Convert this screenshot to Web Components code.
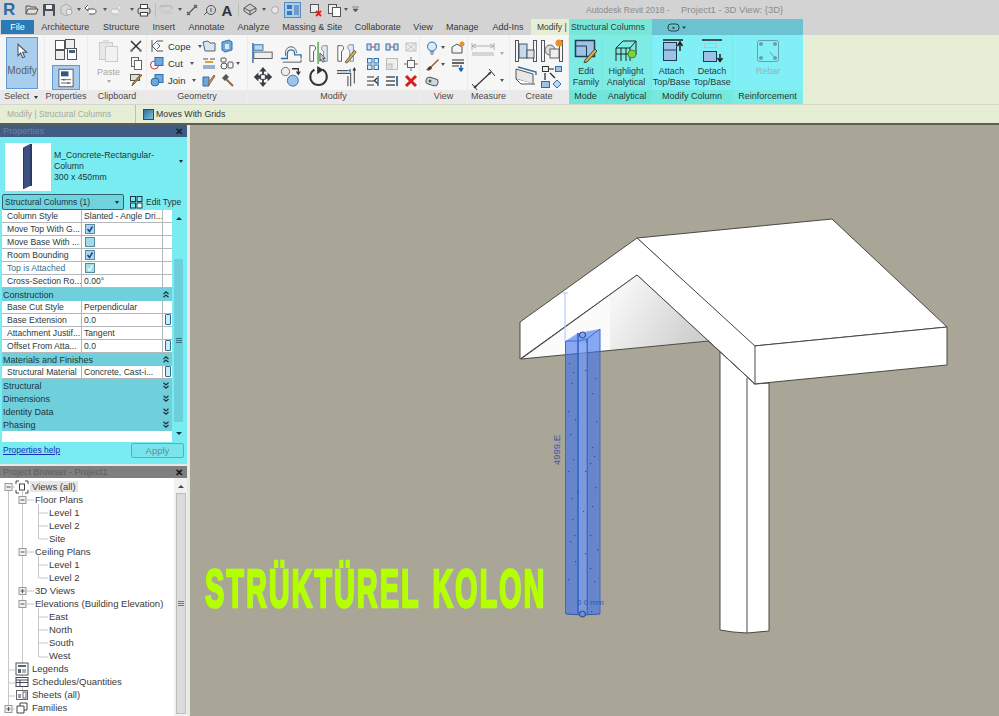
<!DOCTYPE html>
<html>
<head>
<meta charset="utf-8">
<title>Revit</title>
<style>
html, body { margin: 0; padding: 0; background: #a9a597; }
body { font-family: "Liberation Sans", Arial, sans-serif; font-size: 9px; color: #3a3a3a; overflow: hidden; }
</style>
</head>
<body>
<rv-app></rv-app>
<script>
const S = 'fill="none" stroke="#555" stroke-width="1"';
const B = 'fill="#6fa8dc" stroke="#2f6fa8" stroke-width="1"';
const ICONS = {
  open: [14, `<path d="M1 11V3h4l1 1h5v2" ${S}/><path d="M1 11l2-5h10l-2 5z" fill="#e4e0d0" stroke="#555"/>`],
  save: [14, `<rect x="1" y="1" width="12" height="12" rx="1" fill="#4a4f55"/><rect x="4" y="2" width="6" height="4" fill="#eee"/><rect x="3" y="8" width="8" height="5" fill="#cfd4d8"/>`],
  sync: [14, `<path d="M2 4l5-3 5 3v6l-5 3-5-3z" fill="#d8d8d8" stroke="#aaa"/><circle cx="10" cy="9" r="3" fill="#e8e8e8" stroke="#aaa"/>`],
  undo: [14, `<path d="M4 2L1 5l3 3V6h5c2 0 3 1 3 2.500S11 11 9 11H5" fill="#fff" stroke="#555"/>`],
  redo: [14, `<path d="M10 2l3 3-3 3V6H5C3 6 2 7 2 8.500S3 11 5 11h4" fill="#eee" stroke="#bbb"/>`],
  print: [14, `<rect x="1" y="5" width="12" height="6" rx="2" fill="#ddd" stroke="#444"/><rect x="3.500" y="1.500" width="7" height="4" fill="#fff" stroke="#444"/><rect x="3.500" y="9.500" width="7" height="3.500" fill="#fff" stroke="#444"/>`],
  measure: [14, `<path d="M1 3h12M1 4v2M13 4v2" stroke="#aaa" fill="none"/><rect x="1" y="7" width="12" height="4" fill="#ccc"/>`],
  aligned: [14, `<path d="M2 12L12 2M2 9l3 3M9 2l3 3" stroke="#555" fill="none" stroke-width="1.200"/>`],
  tag: [14, `<circle cx="8" cy="7" r="4.500" ${S}/><path d="M1 12l3-3" stroke="#555"/><path d="M8 5v4" stroke="#555"/>`],
  letter: [14, `<text x="7" y="12.500" text-anchor="middle" font-family="Liberation Sans, sans-serif" font-size="15" font-weight="700" fill="#333">A</text>`],
  house: [14, `<path d="M7 1l6 4v3l-6 4-6-4V5z" fill="#c9ccd0" stroke="#555"/><path d="M1 5l6 3 6-3M7 8v4" ${S}/>`],
  sun: [14, `<circle cx="7" cy="7" r="3.500" fill="#e8e8e8" stroke="#aaa"/>`],
  thin: [14, `<rect x="1" y="2" width="5" height="4" fill="#3a7ab8"/><rect x="1" y="8" width="5" height="4" fill="#3a7ab8"/><path d="M8 3h5M8 5h5M8 7h5M8 9h5M8 11h5" stroke="#3a6b98"/>`],
  closehid: [14, `<rect x="1.500" y="1.500" width="8" height="8" fill="#eee" stroke="#555"/><path d="M7 8l5 5M12 8l-5 5" stroke="#d22" stroke-width="1.800"/>`],
  sw: [14, `<rect x="1.500" y="1.500" width="8" height="9" fill="#eee" stroke="#555"/><rect x="5.500" y="4.500" width="8" height="9" fill="#fff" stroke="#555"/>`],
  scissors: [14, `<path d="M2 2l10 10M12 2L2 12" stroke="#333" stroke-width="1.500"/><circle cx="2.500" cy="11.500" r="1.500" fill="#888"/><circle cx="11.500" cy="11.500" r="1.500" fill="#888"/>`],
  copy: [14, `<rect x="2.500" y="1.500" width="7" height="9" fill="#f4f4f4" stroke="#666"/><rect x="5.500" y="4.500" width="7" height="9" fill="#fff" stroke="#666"/>`],
  brush: [14, `<rect x="1.500" y="1.500" width="9" height="6" fill="#ddd" stroke="#555"/><path d="M13 2L5 11l-2 2 1-3 7-8z" fill="#d9a441" stroke="#7a5a20"/>`],
  cope: [14, `<path d="M2 1v12M2 7l5-5h6M2 7l5 5h6" ${S}/><path d="M7 4l3 3-3 3" fill="none" stroke="#2f6fa8"/>`],
  cut: [14, `<circle cx="4.500" cy="9" r="4" fill="#fff" stroke="#b33"/><rect x="5" y="1.500" width="8" height="8" ${B}/>`],
  join: [14, `<rect x="5" y="1.500" width="8" height="8" ${B}/><circle cx="5" cy="9" r="4" ${B}/>`],
  wallfold: [14, `<path d="M1 3l5-1 2 2h5v8H3z" fill="#d8e4f0" stroke="#567"/>`],
  cube: [14, `<path d="M2 3l7-2 3 2v8l-7 2-3-2z" ${B}/><path d="M5 5h4v5H5z" fill="#dfe9f2"/>`],
  beam: [14, `<path d="M1 3h5M8 3h5" stroke="#555"/><rect x="3" y="5" width="8" height="2" fill="#e0a030"/><path d="M1 10h12M1 12h12" stroke="#2f6fa8"/>`],
  cutvoid: [14, `<rect x="1" y="2" width="5" height="4" rx="1" ${S}/><circle cx="4" cy="10" r="3" ${S}/><rect x="8" y="6" width="5" height="6" rx="1" ${S}/>`],
  paint: [14, `<path d="M1 4h6v9H1z" ${B}/><path d="M6 10l6-8 1 1-6 9z" fill="#e09a2a" stroke="#865"/>`],
  hammer: [14, `<path d="M2 5l4-4 3 3-4 4z" fill="#556"/><path d="M6 6l7 7" stroke="#8a6a40" stroke-width="2"/>`],
  alignblue: [14, `<rect x="1" y="4" width="4" height="6" fill="#cfe0f0" stroke="#2f6fa8"/><rect x="9" y="4" width="4" height="6" fill="#cfe0f0" stroke="#2f6fa8"/><path d="M5 7h4" stroke="#c33"/>`],
  pin: [14, `<rect x="2" y="3" width="10" height="8" fill="#ededed" stroke="#c0c0c0"/><path d="M2 3l10 8M12 3L2 11" stroke="#c8c8c8"/>`],
  grid: [14, `<rect x="1.500" y="1.500" width="4.500" height="4.500" fill="#dbe7f2" stroke="#2f6fa8"/><rect x="8" y="1.500" width="4.500" height="4.500" fill="#dbe7f2" stroke="#2f6fa8"/><rect x="1.500" y="8" width="4.500" height="4.500" fill="#dbe7f2" stroke="#2f6fa8"/><rect x="8" y="8" width="4.500" height="4.500" fill="#dbe7f2" stroke="#2f6fa8"/>`],
  scale: [14, `<rect x="1.500" y="1.500" width="11" height="11" fill="#eee" stroke="#bbb"/><rect x="1.500" y="7" width="5.500" height="5.500" fill="#ddd" stroke="#bbb"/>`],
  unpin: [14, `<rect x="3.500" y="3.500" width="7" height="7" fill="none" stroke="#666"/><path d="M7 0v3M7 11v3M0 7h3M11 7h3" stroke="#666"/>`],
  arrowr: [14, `<path d="M1 3h7M1 7h8M1 11h7M8 7l3-3M9 7l3 3" stroke="#333" stroke-width="1.200" fill="none"/><path d="M12 2v10" stroke="#2f6fa8" stroke-width="1.500"/>`],
  arrowr2: [14, `<path d="M1 3h9M1 7h9M1 11h9" stroke="#555" stroke-width="1.500" fill="none"/><path d="M12 2v10" stroke="#2f6fa8" stroke-width="1.800"/>`],
  del: [14, `<path d="M2 2l10 10M12 2L2 12" stroke="#d61f1f" stroke-width="3"/>`],
  bulb: [14, `<circle cx="7" cy="5.500" r="4.500" fill="#d8ecfa" stroke="#2f6fa8"/><path d="M5 11h4M5.500 13h3" stroke="#555"/>`],
  viewbox: [14, `<path d="M1 6l5-3 5 3v6H1z" fill="#f4f4f4" stroke="#555"/><circle cx="11" cy="3" r="2.500" fill="#e8912c"/>`],
  viewbrush: [14, `<path d="M13 1L6 8l1 1 7-7z" fill="#9a5b2b"/><path d="M6 8c-3 0-3 3-5 4 3 1 6 0 6-3z" fill="#5a3c22"/>`],
  lines: [14, `<path d="M1 2h12" stroke="#333"/><path d="M1 5h12" stroke="#333" stroke-width="1.500"/><path d="M1 8h7" stroke="#333"/><path d="M10 7v5M8 10l2 3 2-3" fill="none" stroke="#1c5fb0" stroke-width="1.400"/>`],
  viewsec: [14, `<rect x="1" y="3" width="12" height="7" rx="3" transform="rotate(15 7 6.500)" fill="#cfd8e0" stroke="#555"/><circle cx="5" cy="6" r="1.500" fill="#555"/>`],
  dimen: [24, `<path d="M1 2v7M23 2v7M1 5h22" stroke="#b0b0b0" fill="none"/><path d="M1 5l4-2M1 5l4 2M23 5l-4-2M23 5l-4 2" stroke="#b0b0b0"/><rect x="1" y="11" width="22" height="4" fill="#d6d6d6"/>`],
  ruler: [24, `<path d="M3 20L20 4" stroke="#333" stroke-width="1.200"/><path d="M1 16l6 7M18 1l6 7" stroke="#333"/><path d="M3 20l3-1-2-2zM20 4l-3 1 2 2z" fill="#333"/>`],
  tiles: [24, `<rect x="1.500" y="2.500" width="9" height="9" fill="#fff" stroke="#555"/><rect x="11.500" y="1.500" width="9" height="9" fill="#eee" stroke="#555"/><rect x="1.500" y="12.500" width="9" height="9" fill="#eee" stroke="#555"/><rect x="13.500" y="10.500" width="9" height="11" fill="#fff" stroke="#555"/><rect x="15" y="12" width="6" height="3" fill="#3e5f88"/>`],
  panel: [24, `<rect x="3.500" y="1.500" width="17" height="21" fill="#fff" stroke="#445"/><rect x="6" y="4" width="9" height="6" fill="#2f5684"/><path d="M6 14h12M6 18h12" stroke="#445"/><path d="M8 14l2-1.500v3zM16 18l-2-1.500v3z" fill="#445"/>`],
  paste: [24, `<rect x="2.500" y="3.500" width="13" height="17" fill="#e8e8e8" stroke="#ccc"/><rect x="8.500" y="7.500" width="12" height="15" fill="#f2f2f2" stroke="#ccc"/><rect x="6" y="1" width="6" height="4" fill="#ddd"/>`],
  align: [24, `<path d="M1 1v22" stroke="#2f6fa8" stroke-width="1.500"/><rect x="2" y="3" width="10" height="6" fill="#bcd8f0" stroke="#2f6fa8"/><rect x="2" y="11" width="20" height="7" fill="#eee" stroke="#555"/>`],
  offset: [24, `<path d="M1 18h7v-5c0-6 8-6 8 0v1h7v4" fill="none" stroke="#2f6fa8" stroke-width="1.400"/><path d="M3 22h20v-3" fill="none" stroke="#555"/><path d="M6 15V12c0-9 12-9 12 0" fill="none" stroke="#555"/>`],
  mirror: [24, `<path d="M2 4h4c3 0 3 5 0 6v11H2z" fill="#fff" stroke="#555"/><path d="M11 0v24" stroke="#4aa24a" stroke-width="1.500"/><path d="M21 4h-4c-3 0-3 5 0 6v11h4z" fill="#dfe9f2" stroke="#7a8a9a"/><path d="M13 12l6 6-3 0 2 3-2 1-2-3-1 2z" fill="#ccc" stroke="#555"/>`],
  mirror2: [24, `<path d="M2 4h4c3 0 3 5 0 6v11H2z" fill="#fff" stroke="#555"/><path d="M19 3h-4c-3 0-3 5 0 6v12h4z" fill="#dfe9f2" stroke="#7a8a9a"/><path d="M10 22l10-13 2 2-10 12z" fill="#e2b23c" stroke="#555"/>`],
  move: [24, `<path d="M12 1l4 5h-3v4h4V7l5 5-5 5v-3h-4v4h3l-4 5-4-5h3v-4H7v3l-5-5 5-5v3h4V6H8z" fill="#3a3f46"/><rect x="9.500" y="9.500" width="5" height="5" fill="#fff" stroke="#333"/>`],
  copy2: [24, `<circle cx="6" cy="6" r="4.500" fill="#eee" stroke="#666"/><path d="M13 3h7v5M18 6l2 3 2-3" fill="none" stroke="#333" stroke-width="1.400"/><circle cx="14" cy="16" r="6" fill="#9cc3e6" stroke="#2f6fa8"/>`],
  rotate: [24, `<path d="M16 4A9 9 0 1 1 7 4" fill="none" stroke="#333" stroke-width="2.200"/><path d="M10 0l7 4-7 5z" fill="#333"/>`],
  trim: [24, `<path d="M1 5h12M1 8h15v14" fill="none" stroke="#555" stroke-width="1.200"/><path d="M13 11v11M20 4v15" stroke="#555" stroke-width="1.200"/><path d="M20 1l-2 4h4z" fill="#333"/><path d="M16 3l-3 2 3 2z" fill="#2f6fa8"/>`],
  comp: [24, `<rect x="1.500" y="1.500" width="3" height="21" fill="none" stroke="#555"/><rect x="19.500" y="1.500" width="3" height="21" fill="none" stroke="#555"/><rect x="5" y="5" width="8" height="14" fill="#c5daec" stroke="#456"/><rect x="13" y="11" width="7" height="8" fill="#e4e4e4" stroke="#456"/>`],
  ingroup: [24, `<rect x="1.500" y="1.500" width="3" height="21" fill="none" stroke="#555"/><rect x="19.500" y="1.500" width="3" height="21" fill="none" stroke="#555"/><circle cx="10" cy="11" r="5" fill="#ddd" stroke="#666"/><rect x="10" y="10" width="9" height="9" fill="#eee" stroke="#666"/><circle cx="19" cy="4" r="3.500" fill="#f0901c"/>`],
  model: [24, `<path d="M2 4l17 5v10L2 14z" fill="#e8e8e8" stroke="#555"/><path d="M4 2l18 5v3" fill="none" stroke="#2f6fa8" stroke-width="1.300"/><path d="M2 14l5 5h14" fill="#fff" stroke="#555"/>`],
  flow: [24, `<rect x="2.500" y="1.500" width="6" height="5" fill="#eee" stroke="#333"/><rect x="15.500" y="1.500" width="6" height="5" fill="#9cc3e6" stroke="#2f6fa8"/><path d="M9 4h5M5 8v7M10 8l5 5" stroke="#222" fill="none" stroke-width="1.200"/><rect x="1.500" y="16.500" width="8" height="6" fill="#9cc3e6" stroke="#2f6fa8"/><path d="M17 15l4 4-4 4-4-4z" fill="#bcd8f0" stroke="#2f6fa8"/>`],
  editfam: [24, `<rect x="1.500" y="1.500" width="19" height="16" fill="#9cc3e6" stroke="#243a50" stroke-width="1.500"/><path d="M1.500 7h11v10" fill="none" stroke="#243a50"/><path d="M11 21l10-11 2 2-10 11-3 1z" fill="#e2b23c" stroke="#444"/>`],
  highl: [24, `<path d="M2 9l7-7h13v14" fill="none" stroke="#222"/><path d="M2 9h14v13M2 9v13M7 9v13M12 9v13M2 15h14M16 9l6-7" fill="none" stroke="#222"/><circle cx="18" cy="15" r="4" fill="#7bd33f" stroke="#3e8a1f"/>`],
  attach: [24, `<path d="M3 1h20" stroke="#222" stroke-width="1.500"/><rect x="3.500" y="3.500" width="13" height="18" fill="#9cc3e6" stroke="#243a50"/><path d="M3.500 11h13" stroke="#243a50"/><path d="M20 12V4M17.500 7L20 3l2.500 4" fill="none" stroke="#222" stroke-width="1.500"/>`],
  detach: [24, `<path d="M2 1h20" stroke="#222" stroke-width="1.500"/><rect x="4.500" y="4.500" width="12" height="4" fill="none" stroke="#b8c4cc"/><rect x="3.500" y="12.500" width="13" height="10" fill="#9cc3e6" stroke="#243a50"/><path d="M20 15v7M17.500 19l2.500 3.500 2.500-3.500" fill="none" stroke="#222" stroke-width="1.500"/>`],
  rebar: [24, `<rect x="1.500" y="1.500" width="21" height="21" rx="2" fill="none" stroke="#6aa0a8"/><circle cx="5" cy="5" r="2" fill="#6aa0a8"/><circle cx="19" cy="5" r="2" fill="#6aa0a8"/><circle cx="5" cy="19" r="2" fill="#6aa0a8"/><circle cx="19" cy="19" r="2" fill="#6aa0a8"/><path d="M14 13l5 6" stroke="#6aa0a8"/>`],
  cursor: [24, `<path d="M6 2v17l4-4 3 7 3-1-3-7h6z" fill="#fff" stroke="#4d5560" stroke-width="1.600"/>`],
  edittype: [14, `<rect x="1.500" y="1.500" width="5" height="5" fill="none" stroke="#234"/><rect x="8" y="1.500" width="5" height="5" fill="none" stroke="#234"/><rect x="1.500" y="8" width="5" height="5" fill="none" stroke="#234"/><rect x="8" y="8" width="5" height="5" fill="#fff" stroke="#234"/>`],
  legend: [14, `<rect x="1" y="1" width="12" height="12" fill="#fff" stroke="#555"/><rect x="3" y="3" width="8" height="2" fill="#567"/><rect x="3" y="7" width="3" height="4" fill="#567"/><path d="M7 8h4M7 10h4" stroke="#567"/>`],
  schedule: [14, `<rect x="1" y="2.500" width="12" height="9" fill="#fff" stroke="#445"/><path d="M1 5h12M1 7.500h12M5 5v6.500" stroke="#445"/>`],
  sheet: [14, `<rect x="1.500" y="2.500" width="11" height="9" fill="#fff" stroke="#666"/><rect x="3" y="6" width="3" height="4" fill="#99a"/><rect x="8" y="4" width="3" height="6" fill="none" stroke="#667"/>`],
  family: [14, `<path d="M2 5h3V2h7v7H9v3H2z" fill="#fff" stroke="#444"/><path d="M5 5h4v4" fill="none" stroke="#444"/>`],
  views: [14, `<path d="M1 4V1h3M10 1h3v3M13 10v3h-3M4 13H1v-3" fill="none" stroke="#444"/><rect x="4.500" y="4" width="5" height="6" fill="#fff" stroke="#444"/>`]
};

// svg icon, looked up by name from the table above
class RvIcon extends HTMLElement {
  connectedCallback() {
    const [vb, body] = ICONS[this.getAttribute("name")];
    const size = this.getAttribute("size") || vb;
    this.attachShadow({mode: "open"}).innerHTML = `
      <style>:host { display: inline-block; flex: none; width: ${size}px; height: ${size}px; line-height: 0; } svg { display: block; }</style>
      <svg xmlns="http://www.w3.org/2000/svg" width="${size}" height="${size}" viewBox="0 0 ${vb} ${vb}">${body}</svg>`;
  }
}
customElements.define("rv-icon", RvIcon);

// little dropdown triangle
class RvDrop extends HTMLElement {
  constructor() {
    super();
    this.attachShadow({mode: "open"}).innerHTML = `<style>
      :host { display: inline-block; flex: none; width: 0; height: 0; border-left: 2px solid transparent; border-right: 2px solid transparent; border-top: 3px solid var(--drop, #555); margin: 0 2px; }
    </style>`;
  }
}
customElements.define("rv-drop", RvDrop);

// ribbon panel: body on top, name strip under it
class RvPanel extends HTMLElement {
  constructor() {
    super();
    this.attachShadow({mode: "open"}).innerHTML = `<style>
      :host { display: flex; flex-direction: column; flex: none; width: ${this.getAttribute("w")}px; background: var(--body, #f6f6f6); border-right: 1px solid var(--edge, #ececec); box-sizing: border-box; }
      .body { flex: 1; min-height: 0; display: flex; box-sizing: border-box; padding: ${this.getAttribute("pad") || "0"}; gap: ${this.getAttribute("gap") || "0"}; }
      .name { height: 14px; background: var(--strip, #e9e9e9); color: var(--ink, #4a4a4a); text-align: center; line-height: 13px; white-space: nowrap; font-size: 9px; }
    </style><div class="body"><slot></slot></div><div class="name"><slot name="name"></slot></div>`;
  }
}
customElements.define("rv-panel", RvPanel);

// large tool: icon with label lines under it
class RvTool extends HTMLElement {
  constructor() {
    super();
    const dim = this.hasAttribute("dim");
    this.attachShadow({mode: "open"}).innerHTML = `<style>
      :host { display: flex; flex-direction: column; align-items: center; flex: none; box-sizing: border-box; width: ${this.getAttribute("w")}px; padding-top: 4px; text-align: center; color: ${dim ? "#8fb6bc" : "#2f3a3c"}; line-height: 11px; font-size: 9px; }
      .t { margin-top: 3px; white-space: nowrap; }
    </style><rv-icon name="${this.getAttribute("icon")}"></rv-icon><div class="t">${this.getAttribute("l1")}<br>${this.getAttribute("l2") || "&nbsp;"}</div>`;
  }
}
customElements.define("rv-tool", RvTool);

const ribbonTpl = document.createElement("template");
ribbonTpl.innerHTML = `
<style>
  :host { display: flex; height: 70px; background: #e6eed6; font-size: 9px; border-bottom: 1px solid #d4d8c8; box-sizing: border-box; }
  .col { display: flex; flex-direction: column; }
  .row { display: flex; align-items: center; }
  .rows3 { display: flex; flex-direction: column; padding-top: 4px; gap: 3px; }
  .rows3 > * { height: 14px; display: flex; align-items: center; }
  .modifybtn { width: 32px; height: 52px; margin: 2px 0 0 6px; background: #a9cdec; border: 1px solid #5f9bd0; box-sizing: border-box; display: flex; flex-direction: column; align-items: center; color: #5a5f60; font-size: 10px; padding-top: 5px; }
  .modifybtn span { margin-top: 6px; }
  .propwrap { display: flex; flex-direction: column; align-items: center; width: 100%; padding-top: 3px; }
  .propon { width: 28px; height: 25px; background: #a9cdec; border: 1px solid #5f9bd0; box-sizing: border-box; display: flex; align-items: center; justify-content: center; margin-top: 3px; }
  .paste { width: 41px; display: flex; flex-direction: column; align-items: center; color: #a8a8a8; padding-top: 4px; gap: 3px; }
  .lbl { margin-left: 4px; color: #333; font-size: 9.500px; }
  .teal { --body: #7dece4; --strip: #71e6d8; --ink: #23383a; --edge: #78e6dc; }
  .cyan { --body: #80f0f6; --strip: #76e8dc; --ink: #23383a; --edge: #78e8ea; }
  .cyan2 { --body: #80f0f6; --strip: #7cebe4; --ink: #23383a; --edge: #80f0f6; }
  .mod { display: grid; grid-template-columns: repeat(4, 22px); column-gap: 6px; padding: 7px 0 0 4px; grid-auto-rows: 24px; justify-items: center; }
  .small3 { display: grid; grid-template-columns: repeat(3, 14px); column-gap: 5px; padding: 3px 0 0 8px; grid-auto-rows: 17px; align-items: center; }
  .v { display: grid; grid-template-columns: 24px 16px; padding: 4px 0 0 5px; grid-auto-rows: 17px; align-items: center; column-gap: 2px; }
  .v div { display: flex; align-items: center; }
</style>
<rv-panel w="45">
  <div class="modifybtn"><rv-icon name="cursor" size="16"></rv-icon><span>Modify</span></div>
  <span slot="name">Select <rv-drop style="--drop:#333"></rv-drop></span>
</rv-panel>
<rv-panel w="43">
  <div class="propwrap"><rv-icon name="tiles"></rv-icon><div class="propon"><rv-icon name="panel" size="20"></rv-icon></div></div>
  <span slot="name">Properties</span>
</rv-panel>
<rv-panel w="59">
  <div class="paste"><rv-icon name="paste"></rv-icon><span style="margin-top:1px">Paste</span><rv-drop style="--drop:#aaa"></rv-drop></div>
  <div class="rows3"><rv-icon name="scissors"></rv-icon><rv-icon name="copy"></rv-icon><rv-icon name="brush"></rv-icon></div>
  <span slot="name">Clipboard</span>
</rv-panel>
<rv-panel w="101" pad="0 0 0 3px">
  <div class="rows3" style="width:52px">
    <div><rv-icon name="cope"></rv-icon><span class="lbl">Cope</span><rv-drop style="margin-left:7px"></rv-drop></div>
    <div><rv-icon name="cut"></rv-icon><span class="lbl">Cut</span><rv-drop style="margin-left:7px"></rv-drop></div>
    <div><rv-icon name="join"></rv-icon><span class="lbl">Join</span><rv-drop style="margin-left:7px"></rv-drop></div>
  </div>
  <div class="rows3"><rv-icon name="wallfold"></rv-icon><rv-icon name="beam"></rv-icon><rv-icon name="paint"></rv-icon></div>
  <div class="rows3" style="margin-left:4px"><rv-icon name="cube"></rv-icon><div><rv-icon name="cutvoid"></rv-icon><rv-drop></rv-drop></div><rv-icon name="hammer"></rv-icon></div>
  <span slot="name">Geometry</span>
</rv-panel>
<rv-panel w="172">
  <div class="mod">
    <rv-icon name="align" size="22"></rv-icon><rv-icon name="offset" size="22"></rv-icon><rv-icon name="mirror" size="22"></rv-icon><rv-icon name="mirror2" size="22"></rv-icon>
    <rv-icon name="move" size="22"></rv-icon><rv-icon name="copy2" size="22"></rv-icon><rv-icon name="rotate" size="22"></rv-icon><rv-icon name="trim" size="22"></rv-icon>
  </div>
  <div class="small3">
    <rv-icon name="alignblue"></rv-icon><rv-icon name="alignblue"></rv-icon><rv-icon name="pin"></rv-icon>
    <rv-icon name="grid"></rv-icon><rv-icon name="scale"></rv-icon><rv-icon name="unpin"></rv-icon>
    <rv-icon name="arrowr"></rv-icon><rv-icon name="arrowr2"></rv-icon><rv-icon name="del"></rv-icon>
  </div>
  <span slot="name">Modify</span>
</rv-panel>
<rv-panel w="48">
  <div class="v">
    <div><rv-icon name="bulb"></rv-icon><rv-drop></rv-drop></div><rv-icon name="viewbox"></rv-icon>
    <div><rv-icon name="viewbrush"></rv-icon><rv-drop></rv-drop></div><rv-icon name="lines"></rv-icon>
    <rv-icon name="viewsec"></rv-icon>
  </div>
  <span slot="name">View</span>
</rv-panel>
<rv-panel w="42">
  <div class="col" style="padding:6px 0 0 3px;gap:3px">
    <div class="row"><rv-icon name="dimen"></rv-icon><rv-drop style="--drop:#aaa;margin-left:5px"></rv-drop></div>
    <div class="row"><rv-icon name="ruler"></rv-icon><rv-drop style="margin-left:5px"></rv-drop></div>
  </div>
  <span slot="name">Measure</span>
</rv-panel>
<rv-panel w="59">
  <div style="display:grid;grid-template-columns:24px 24px;column-gap:2px;row-gap:1px;padding:4px 0 0 4px;grid-auto-rows:25px">
    <rv-icon name="comp"></rv-icon><rv-icon name="ingroup"></rv-icon><rv-icon name="model"></rv-icon><rv-icon name="flow"></rv-icon>
  </div>
  <span slot="name">Create</span>
</rv-panel>
<rv-panel w="34" class="teal"><rv-tool w="34" icon="editfam" l1="Edit" l2="Family"></rv-tool><span slot="name">Mode</span></rv-panel>
<rv-panel w="49" class="teal"><rv-tool w="46" icon="highl" l1="Highlight" l2="Analytical"></rv-tool><span slot="name">Analytical</span></rv-panel>
<rv-panel w="81" class="cyan"><rv-tool w="39" icon="attach" l1="Attach" l2="Top/Base"></rv-tool><rv-tool w="42" icon="detach" l1="Detach" l2="Top/Base"></rv-tool><span slot="name">Modify Column</span></rv-panel>
<rv-panel w="70" class="cyan2"><rv-tool w="70" icon="rebar" l1="Rebar" dim></rv-tool><span slot="name">Reinforcement</span></rv-panel>
`;
class RvRibbon extends HTMLElement {
  constructor() {
    super();
    this.attachShadow({mode: "open"}).appendChild(ribbonTpl.content.cloneNode(true));
  }
}
customElements.define("rv-ribbon", RvRibbon);

// quick access toolbar: [icon or drop or sep, width of its cell]
const QAT = [["open",17],["save",17],["sync",16],["drop",9],["undo",17],["drop",8],["redo",19],["drop",9],["print",18],["sep",4],["measure",17],["drop",9],["aligned",18],["tag",17],["letter",18],["sep",5],["house",17],["drop",8],["sun",16],["thin",25],["closehid",18],["sw",15],["drop",10],["more",14]];
const qatCell = ([n, w]) => {
  let inner;
  if (n === "drop") inner = `<rv-drop></rv-drop>`;
  else if (n === "sep") inner = `<div class="sep"></div>`;
  else if (n === "thin") inner = `<div class="on"><rv-icon name="thin"></rv-icon></div>`;
  else if (n === "more") inner = `<svg width="7" height="7" viewBox="0 0 7 7" style="display:block"><path d="M0 1h7M1 3h5l-2.500 3z" fill="#555" stroke="#555" stroke-width=".6"/></svg>`;
  else inner = `<rv-icon name="${n}"></rv-icon>`;
  return `<div class="c" style="width:${w}px">${inner}</div>`;
};
const titleTpl = document.createElement("template");
titleTpl.innerHTML = `
<style>
  :host { display: flex; align-items: center; height: 19px; background: #d3d3d3; color: #8c8c8c; box-sizing: border-box; padding-left: 3px; white-space: nowrap; }
  .logo { font: 700 17px/19px "Liberation Sans", sans-serif; color: #2b6ea8; width: 22px; }
  .q { display: flex; align-items: center; width: 561px; }
  .c { display: flex; align-items: center; flex: none; }
  .sep { width: 1px; height: 14px; background: #bdbdbd; }
  .on { background: #a9cdec; border: 1px solid #4f8cc5; width: 17px; height: 16px; display: flex; align-items: center; justify-content: center; box-sizing: border-box; }
  .a { width: 95px; font-size: 8.500px; flex: none; }
  .b { font-size: 9.500px; }
</style>
<div class="logo">R</div>
<div class="q">${QAT.map(qatCell).join("")}</div>
<span class="a">Autodesk Revit 2018 -</span><span class="b">Project1 - 3D View: {3D}</span>
`;
class RvTitlebar extends HTMLElement {
  constructor() {
    super();
    this.attachShadow({mode: "open"}).appendChild(titleTpl.content.cloneNode(true));
  }
}
customElements.define("rv-titlebar", RvTitlebar);

const tabsTpl = document.createElement("template");
const TABS = [["Architecture", 62.5], ["Structure", 49.5], ["Insert", 35.5], ["Annotate", 50], ["Analyze", 44], ["Massing &amp; Site", 73.5], ["Collaborate", 57.5], ["View", 33], ["Manage", 45.5], ["Add-Ins", 46]];
tabsTpl.innerHTML = `
<style>
  :host { display: flex; height: 16px; background: #d3d3d3; font-size: 9px; color: #383838; line-height: 17px; }
  .file { width: 33px; margin: 1px 0 1px 1px; background: #2b7ab8; color: #fff; text-align: center; line-height: 14px; }
  .tab { text-align: center; white-space: nowrap; }
  .ctx { width: 38px; background: #e6eed6; white-space: nowrap; padding-left: 6px; box-sizing: border-box; font-size: 8.500px; }
  .sc { width: 83px; background: #79e6d8; white-space: nowrap; padding-left: 2px; box-sizing: border-box; font-size: 8.700px; }
  .rest { width: 151px; background: #6cc2d0; display: flex; align-items: center; padding-left: 15px; box-sizing: border-box; }
  svg { display: block; }
</style>
<div class="file">File</div>
${TABS.map(t => `<div class="tab" style="width:${t[1]}px">${t[0]}</div>`).join("")}
<div class="ctx">Modify |</div>
<div class="sc">Structural Columns</div>
<div class="rest"><svg width="20" height="9" viewBox="0 0 20 9"><rect x="1" y="1" width="11" height="7" rx="3" fill="none" stroke="#244"/><path d="M4.500 5.500l2-2 2 2z" fill="#244"/><path d="M15 3.500h4l-2 2.500z" fill="#244"/></svg></div>
`;
class RvTabs extends HTMLElement {
  constructor() {
    super();
    this.attachShadow({mode: "open"}).appendChild(tabsTpl.content.cloneNode(true));
  }
}
customElements.define("rv-tabs", RvTabs);

class RvOptions extends HTMLElement {
  constructor() {
    super();
    this.attachShadow({mode: "open"}).innerHTML = `<style>
      :host { display: flex; align-items: center; height: 20px; box-sizing: border-box; background: #e6eed6; border-bottom: 2px solid #5d5d55; font-size: 8.800px; }
      .ctx { width: 136px; padding-left: 7px; box-sizing: border-box; color: #a4aa9c; border-right: 1px solid #bcc2ae; height: 100%; line-height: 18px; font-size: 8.500px; }
      .chk { width: 9px; height: 9px; background: linear-gradient(135deg, #2f6f9f, #7ec0de); border: 1px solid #445; margin: 0 2px 0 7px; }
      span { color: #333; }
    </style><div class="ctx">Modify | Structural Columns</div><div class="chk"></div><span>Moves With Grids</span>`;
  }
}
customElements.define("rv-options", RvOptions);

// one property row of the palette
class RvProp extends HTMLElement {
  constructor() {
    super();
    const value = this.getAttribute("value");
    const check = this.getAttribute("check");
    const dim = this.hasAttribute("dim");
    const btn = this.hasAttribute("btn");
    let cell = value || "";
    if (check !== null) {
      const fill = dim ? "#9fdfe8" : check === "on" ? "#a8d8ee" : "#9fdcea";
      cell = `<svg width="10" height="10" viewBox="0 0 10 10" style="margin:1px 0 0 1px;display:block"><rect x=".5" y=".5" width="9" height="9" fill="${fill}" stroke="#5a8aa0"/>${check === "on" ? `<path d="M2.500 5l2 2.500 3-5" fill="none" stroke="${dim ? "#e8f8f8" : "#1c3f9a"}" stroke-width="1.500"/>` : ""}</svg>`;
    }
    this.attachShadow({mode: "open"}).innerHTML = `<style>
      :host { display: grid; grid-template-columns: 80px 81px 9px; height: 13px; background: #fff; box-sizing: border-box; border-bottom: 1px solid #b4b8bc; font-size: 8.600px; line-height: 12px; color: #2b3a3c; white-space: nowrap; }
      .n { padding-left: 5px; border-right: 1px solid #b4b8bc; overflow: hidden; color: ${dim ? "#3b6f86" : "inherit"}; }
      .v { padding-left: 2px; border-right: 1px solid #b4b8bc; overflow: hidden; }
      .b { display: flex; justify-content: center; }
      .b i { display: ${btn ? "block" : "none"}; width: 6px; height: 11px; background: #cfeaf4; border: 1px solid #2e6f8f; border-radius: 1px; box-sizing: border-box; }
    </style><div class="n">${this.getAttribute("name")}</div><div class="v">${cell}</div><div class="b"><i></i></div>`;
  }
}
customElements.define("rv-prop", RvProp);

class RvGroup extends HTMLElement {
  constructor() {
    super();
    const open = this.hasAttribute("open");
    this.attachShadow({mode: "open"}).innerHTML = `<style>
      :host { display: flex; justify-content: space-between; align-items: center; height: 13px; background: #6fd0dc; font-size: 9px; color: #1f3438; padding: 0 3px 0 1px; box-sizing: border-box; }
      svg { display: block; }
    </style><span>${this.getAttribute("name")}</span><svg width="6" height="7" viewBox="0 0 6 7"><path d="${open ? "M.5 3L3 .8 5.500 3M.5 6.200L3 4 5.500 6.200" : "M.5 .8L3 3l2.500-2.200M.5 4L3 6.200 5.500 4"}" fill="none" stroke="#1f3438" stroke-width="1.200"/></svg>`;
  }
}
customElements.define("rv-group", RvGroup);

const propsTpl = document.createElement("template");
propsTpl.innerHTML = `
<style>
  :host { display: flex; flex-direction: column; width: 187px; height: 339px; background: #79ecf2; font-size: 9px; color: #1f3438; flex: none; }
  .head { height: 12px; background: #3f5c84; color: #6f8296; display: flex; justify-content: space-between; align-items: center; padding: 0 4px 0 3px; font-size: 9px; flex: none; }
  .head b { color: #10202c; font-size: 10px; }
  .type { display: flex; height: 57px; padding: 6px 3px 0 5px; box-sizing: border-box; flex: none; }
  .thumb { width: 46px; height: 48px; background: #fff; display: flex; justify-content: center; flex: none; }
  .tname { margin-left: 3px; padding-top: 7px; line-height: 11px; flex: 1; font-size: 8.700px; }
  .tarrow { align-self: center; margin: 0 1px 14px 0; --drop: #16303a; }
  .sel { display: flex; align-items: center; height: 16px; flex: none; padding-left: 2px; }
  .box { width: 122px; height: 16px; background: #6fd4e0; border: 1px solid #33616c; border-radius: 2px; box-sizing: border-box; display: flex; align-items: center; justify-content: space-between; padding: 0 2px 0 2px; font-size: 8.500px; --drop: #16303a; }
  .et { margin-left: 5px; display: flex; align-items: center; gap: 3px; font-size: 8.500px; white-space: nowrap; }
  .main { display: flex; flex: none; height: 232px; padding-left: 2px; }
  .table { width: 170px; flex: none; background: #fff; }
  .scroll { width: 11px; margin-left: 1px; display: flex; flex-direction: column; align-items: center; background: #79ecf2; }
  .up { height: 49px; padding-top: 6px; box-sizing: border-box; }
  .thumbb { width: 9px; height: 163px; background: #6cd0dc; display: flex; align-items: center; justify-content: center; border-radius: 1px; }
  .foot { flex: 1; display: flex; justify-content: space-between; align-items: center; padding: 0 3px 6px 3px; }
  a { color: #1330b8; text-decoration: underline; font-size: 8.500px; }
  .apply { width: 53px; height: 15px; border: 1px solid #4fb4c0; background: #78e4ec; text-align: center; line-height: 14px; color: #5f8f96; border-radius: 2px; box-sizing: border-box; font-size: 9.500px; }
</style>
<div class="head"><span>Properties</span><b>&#10005;</b></div>
<div class="type">
  <div class="thumb"><svg width="14" height="48" viewBox="0 0 14 48"><path d="M3 4l6-3v42l-6 3z" fill="#3c4f80"/><path d="M9 1h2v42H9z" fill="#2a3a66"/><path d="M3 4v42h-1V5z" fill="#2a3a66"/></svg></div>
  <div class="tname">M_Concrete-Rectangular-<br>Column<br>300 x 450mm</div>
  <rv-drop class="tarrow"></rv-drop>
</div>
<div class="sel">
  <div class="box"><span>Structural Columns (1)</span><rv-drop></rv-drop></div>
  <div class="et"><rv-icon name="edittype"></rv-icon>Edit Type</div>
</div>
<div class="main">
  <div class="table">
    <rv-prop name="Column Style" value="Slanted - Angle Dri..."></rv-prop>
    <rv-prop name="Move Top With G..." check="on"></rv-prop>
    <rv-prop name="Move Base With ..." check="off"></rv-prop>
    <rv-prop name="Room Bounding" check="on"></rv-prop>
    <rv-prop name="Top is Attached" check="on" dim></rv-prop>
    <rv-prop name="Cross-Section Ro..." value="0.00°"></rv-prop>
    <rv-group name="Construction" open></rv-group>
    <rv-prop name="Base Cut Style" value="Perpendicular"></rv-prop>
    <rv-prop name="Base Extension" value="0.0" btn></rv-prop>
    <rv-prop name="Attachment Justif..." value="Tangent"></rv-prop>
    <rv-prop name="Offset From Atta..." value="0.0" btn></rv-prop>
    <rv-group name="Materials and Finishes" open></rv-group>
    <rv-prop name="Structural Material" value="Concrete, Cast-i..." btn></rv-prop>
    <rv-group name="Structural"></rv-group>
    <rv-group name="Dimensions"></rv-group>
    <rv-group name="Identity Data"></rv-group>
    <rv-group name="Phasing"></rv-group>
  </div>
  <div class="scroll">
    <div class="up"><svg width="6" height="4" viewBox="0 0 6 4" style="display:block"><path d="M0 4l3-3 3 3z" fill="#16303a"/></svg></div>
    <div class="thumbb"><svg width="6" height="5" viewBox="0 0 6 5" style="display:block"><path d="M0 .5h6M0 2.500h6M0 4.500h6" stroke="#2f6f7c"/></svg></div>
    <div style="margin-top:10px"><svg width="6" height="4" viewBox="0 0 6 4" style="display:block"><path d="M0 0l3 3 3-3z" fill="#16303a"/></svg></div>
  </div>
</div>
<div class="foot"><a>Properties help</a><div class="apply">Apply</div></div>
`;
class RvProperties extends HTMLElement {
  constructor() {
    super();
    this.attachShadow({mode: "open"}).appendChild(propsTpl.content.cloneNode(true));
  }
}
customElements.define("rv-properties", RvProperties);

// one tree row; x is the text column, icon is optional
class RvNode extends HTMLElement {
  constructor() {
    super();
    const ix = this.getAttribute("x");
    const icon = this.getAttribute("icon");
    const sel = this.hasAttribute("sel");
    this.attachShadow({mode: "open"}).innerHTML = `<style>
      :host { display: flex; align-items: center; height: 13px; padding-left: ${ix}px; box-sizing: border-box; white-space: nowrap; font-size: 9.500px; color: #3a3a3a; }
      span { ${sel ? "background:#e6e6e6;padding:0 2px;margin-left:-2px;" : ""} }
      rv-icon { margin: 0 3px 0 -17px; }
    </style>${icon ? `<rv-icon name="${icon}"></rv-icon>` : ""}<span>${this.getAttribute("label")}</span>`;
  }
}
customElements.define("rv-node", RvNode);

const browserTpl = document.createElement("template");
const box = (x, y, plus) => `<rect x="${x - 3.5}" y="${y - 3.5}" width="7" height="7" fill="#f0f0f0" stroke="#999"/><path d="M${x - 2} ${y}h4${plus ? `M${x} ${y - 2}v4` : ""}" stroke="#555"/>`;
const t = y => y - 477;
browserTpl.innerHTML = `
<style>
  :host { display: flex; flex-direction: column; flex: 1; width: 187px; min-height: 0; font-size: 9.500px; }
  .head { height: 12px; background: #7f7f7f; color: #5d5d5d; display: flex; justify-content: space-between; align-items: center; padding: 0 4px 0 3px; font-size: 9px; flex: none; }
  .head b { color: #111; font-size: 10px; }
  .wrap { flex: 1; display: flex; background: #fff; min-height: 0; }
  .tree { position: relative; width: 174px; padding-top: 2px; box-sizing: border-box; flex: none; }
  .lines { position: absolute; left: 0; top: 0; }
  rv-node { position: relative; }
  .bar { width: 13px; background: #f0f0f0; display: flex; flex-direction: column; align-items: center; padding-top: 6px; box-sizing: border-box; }
  .thumbb { width: 10px; height: 221px; margin-top: 5px; background: #dcdcdc; border: 1px solid #bdbdbd; box-sizing: border-box; display: flex; align-items: center; justify-content: center; }
</style>
<div class="head"><span>Project Browser - Project1</span><b>&#10005;</b></div>
<div class="wrap">
  <div class="tree">
    <svg class="lines" width="174" height="239" viewBox="0 0 174 239">
      <path d="M22.500 ${t(490)}V${t(695)}M8.500 ${t(490)}V${t(704)}M38.500 ${t(503)}V${t(538)}M38.500 ${t(555)}V${t(577)}M38.500 ${t(607)}V${t(656)}M26 ${t(499)}h8M26 ${t(551)}h8M26 ${t(590)}h8M26 ${t(603)}h8M39 ${t(512)}h9M39 ${t(525)}h9M39 ${t(538)}h9M39 ${t(564)}h9M39 ${t(577)}h9M39 ${t(616)}h9M39 ${t(629)}h9M39 ${t(642)}h9M39 ${t(656)}h9M9 ${t(669)}h6M9 ${t(682)}h6M9 ${t(695)}h6M12 ${t(708)}h3M12 ${t(486)}h3" stroke="#c8c8c8" fill="none"/>
      ${box(8.5, t(486))}${box(22.5, t(499))}${box(22.5, t(551))}${box(22.5, t(590), true)}${box(22.5, t(603))}${box(8.5, t(708), true)}
    </svg>
    <rv-node x="32" icon="views" label="Views (all)" sel></rv-node>
    <rv-node x="35" label="Floor Plans"></rv-node>
    <rv-node x="49" label="Level 1"></rv-node>
    <rv-node x="49" label="Level 2"></rv-node>
    <rv-node x="49" label="Site"></rv-node>
    <rv-node x="35" label="Ceiling Plans"></rv-node>
    <rv-node x="49" label="Level 1"></rv-node>
    <rv-node x="49" label="Level 2"></rv-node>
    <rv-node x="35" label="3D Views"></rv-node>
    <rv-node x="35" label="Elevations (Building Elevation)"></rv-node>
    <rv-node x="49" label="East"></rv-node>
    <rv-node x="49" label="North"></rv-node>
    <rv-node x="49" label="South"></rv-node>
    <rv-node x="49" label="West"></rv-node>
    <rv-node x="32" icon="legend" label="Legends"></rv-node>
    <rv-node x="32" icon="schedule" label="Schedules/Quantities"></rv-node>
    <rv-node x="32" icon="sheet" label="Sheets (all)"></rv-node>
    <rv-node x="32" icon="family" label="Families"></rv-node>
  </div>
  <div class="bar">
    <svg width="6" height="4" viewBox="0 0 6 4" style="display:block"><path d="M0 4l3-3 3 3z" fill="#444"/></svg>
    <div class="thumbb"><svg width="6" height="5" viewBox="0 0 6 5" style="display:block"><path d="M0 .5h6M0 2.500h6M0 4.500h6" stroke="#777"/></svg></div>
  </div>
</div>
`;
class RvBrowser extends HTMLElement {
  constructor() {
    super();
    this.attachShadow({mode: "open"}).appendChild(browserTpl.content.cloneNode(true));
  }
}
customElements.define("rv-browser", RvBrowser);

// speckles on the selected column
const DOTS = [[569,362],[573,371],[571,382],[585,369],[595,377],[592,392],[568,410],[575,418],[596,420],[570,433],[592,446],[573,458],[590,462],[568,470],[577,490],[595,486],[585,470],[592,505],[572,518],[583,510],[590,534],[570,540],[597,548],[575,560],[590,567],[568,578],[594,580],[591,610],[574,534],[585,552],[594,455],[571,497]]
  .map(d => `<rect x="${d[0]}" y="${d[1]}" width="1.200" height="1.200" fill="#2a4aa0"/>`).join("");

class RvCanvas extends HTMLElement {
  constructor() {
    super();
    this.attachShadow({mode: "open"}).innerHTML = `<style>
      :host { display: block; flex: 1; background: #a9a597; min-width: 0; }
      svg { display: block; }
    </style>
    <svg xmlns="http://www.w3.org/2000/svg" width="809" height="592" viewBox="190 124 809 592" font-family="Liberation Sans, sans-serif">
      <defs>
        <linearGradient id="under" x1="615" y1="300" x2="690" y2="345" gradientUnits="userSpaceOnUse">
          <stop offset="0" stop-color="#f6f6f6"/><stop offset="1" stop-color="#cfcfcf"/>
        </linearGradient>
      </defs>
      <g stroke="#4a4a42" stroke-width="1" stroke-linejoin="round">
        <path d="M720 352V629L733 631 747 632 758 631 769 630V382L755 383 720 350z" fill="#fff"/>
        <path d="M747 377V632" fill="none"/>
        <path d="M637 237L832 218 947 326 754 345z" fill="#fff"/>
        <path d="M754 345V383L769 381.500 947 364V326z" fill="#fff"/>
        <path d="M637 237L520 321V358L637 274 755 383V345z" fill="#fff"/>
        <path d="M521 358L637 274 709 340z" fill="#fbfbfb" stroke="none"/>
        <path d="M610 293.500L637 274 709 340 610 349.500z" fill="url(#under)" stroke="none"/>
        <path d="M521 358L637 274 755 383M521 358L709 340" fill="none"/>
      </g>
      <g>
        <path d="M565 292V340" stroke="#a9c4f0" fill="none"/>
        <path d="M562 292h6" stroke="#a9c4f0" fill="none"/>
        <path d="M565.500 340L578 332 600 328V613H565.500z" fill="#3a70ee" fill-opacity=".6"/>
        <path d="M578 332V613M587 338V613" stroke="#2f5fd8" stroke-width="1.500" fill="none"/>
        <path d="M566 340H578L587 338 600 328M565.500 340V613M600 328V613" stroke="#3f6acb" fill="none"/>
        <path d="M579 342h8V613h-8z" fill="#a9c0ec" fill-opacity=".35"/>
        <path d="M566 613l16 1 18-1" stroke="#2f55b0" fill="none"/>
        <circle cx="582.500" cy="334" r="3" fill="none" stroke="#24447f"/>
        <circle cx="582.500" cy="613" r="3" fill="#6f8fd0" stroke="#24447f"/>
        ${DOTS}
        <text transform="translate(560 464) rotate(-90)" font-size="9.500" fill="#3c5ca8">4999.E</text>
        <text x="577" y="604" font-size="8" fill="#3358b8">0 0 mm</text>
      </g>
      <text transform="translate(205 605.500) scale(.531 1)" font-size="54" font-weight="700" fill="#b4ff00" stroke="#b4ff00" stroke-width="2.500" letter-spacing="4" word-spacing="4">STRÜKTÜREL KOLON</text>
    </svg>`;
  }
}
customElements.define("rv-canvas", RvCanvas);

class RvApp extends HTMLElement {
  constructor() {
    super();
    this.attachShadow({mode: "open"}).innerHTML = `<style>
      :host { display: flex; flex-direction: column; width: 999px; height: 716px; overflow: hidden; font-family: "Liberation Sans", Arial, sans-serif; }
      .main { flex: 1; display: flex; min-height: 0; }
      .left { width: 190px; flex: none; display: flex; flex-direction: column; gap: 2px; background: #e8e8e8; }
    </style>
    <rv-titlebar></rv-titlebar>
    <rv-tabs></rv-tabs>
    <rv-ribbon></rv-ribbon>
    <rv-options></rv-options>
    <div class="main">
      <div class="left"><rv-properties></rv-properties><rv-browser></rv-browser></div>
      <rv-canvas></rv-canvas>
    </div>`;
  }
}
customElements.define("rv-app", RvApp);
</script>
</body>
</html>
